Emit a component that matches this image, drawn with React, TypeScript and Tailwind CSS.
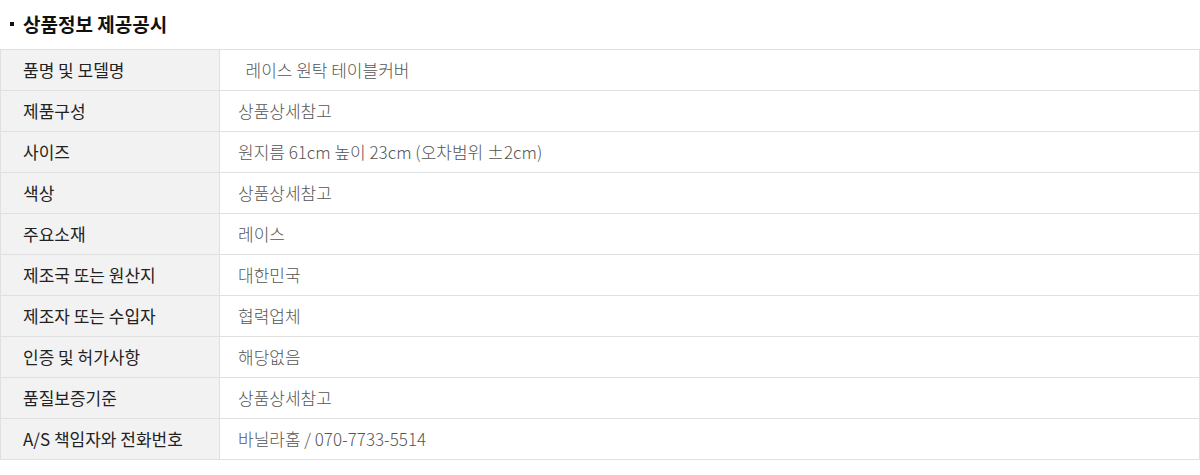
const ROWS: [string, string][] = [
  ['품명 및 모델명', '\u00a0\u00a0레이스 원탁 테이블커버'],
  ['제품구성', '상품상세참고'],
  ['사이즈', '원지름 61cm 높이 23cm (오차범위 ±2cm)'],
  ['색상', '상품상세참고'],
  ['주요소재', '레이스'],
  ['제조국 또는 원산지', '대한민국'],
  ['제조자 또는 수입자', '협력업체'],
  ['인증 및 허가사항', '해당없음'],
  ['품질보증기준', '상품상세참고'],
  ['A/S 책임자와 전화번호', '바닐라홈 / 070-7733-5514'],
]

function App() {
  return (
    <div className="w-[1200px] bg-white font-['Noto_Sans_CJK_KR',sans-serif]">
      <h3 className="flex h-[49px] items-center pb-[1px] pl-[10px] text-[19px] font-bold text-[#111]">
        <span className="mr-[9px] h-[4px] w-[4px] bg-[#111]" />
        상품정보 제공공시
      </h3>
      <table className="w-[1200px] border-collapse text-[17px]">
        <tbody>
          {ROWS.map(([label, value]) => (
            <tr key={label} className="h-[41px]">
              <th className="w-[219px] border border-[#e0e0e0] bg-[#f2f2f2] pl-[22px] text-left font-normal text-[#222]">
                {label}
              </th>
              <td className="border border-[#e0e0e0] pl-[18px] font-light text-[#555]">{value}</td>
            </tr>
          ))}
        </tbody>
      </table>
    </div>
  )
}

export default App
